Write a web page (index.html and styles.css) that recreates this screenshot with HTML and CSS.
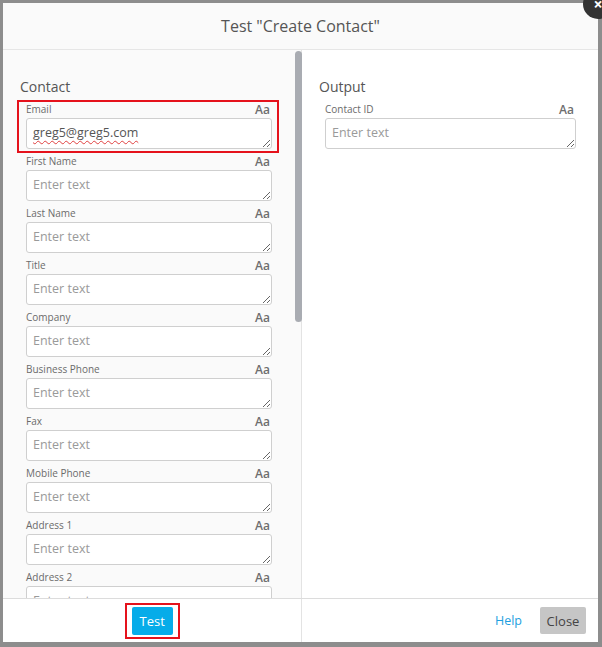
FILE: index.html
```html
<!DOCTYPE html>
<html lang="en">
<head>
<meta charset="utf-8">
<title>Test "Create Contact"</title>
<link rel="stylesheet" href="styles.css">
</head>
<body>
<div class="modal">
  <div class="modal-close"><span>×</span></div>
  <header class="modal-header">Test "Create Contact"</header>
  <div class="modal-body">
    <section class="pane pane-input">
      <h2 class="pane-title">Contact</h2>
      <div class="field field-marked">
        <div class="field-label"><span>Email</span><span class="aa">Aa</span></div>
        <textarea class="field-input filled" spellcheck="false">greg5@greg5.com</textarea>
      </div>
      <div class="field">
        <div class="field-label"><span>First Name</span><span class="aa">Aa</span></div>
        <textarea class="field-input" placeholder="Enter text"></textarea>
      </div>
      <div class="field">
        <div class="field-label"><span>Last Name</span><span class="aa">Aa</span></div>
        <textarea class="field-input" placeholder="Enter text"></textarea>
      </div>
      <div class="field">
        <div class="field-label"><span>Title</span><span class="aa">Aa</span></div>
        <textarea class="field-input" placeholder="Enter text"></textarea>
      </div>
      <div class="field">
        <div class="field-label"><span>Company</span><span class="aa">Aa</span></div>
        <textarea class="field-input" placeholder="Enter text"></textarea>
      </div>
      <div class="field">
        <div class="field-label"><span>Business Phone</span><span class="aa">Aa</span></div>
        <textarea class="field-input" placeholder="Enter text"></textarea>
      </div>
      <div class="field">
        <div class="field-label"><span>Fax</span><span class="aa">Aa</span></div>
        <textarea class="field-input" placeholder="Enter text"></textarea>
      </div>
      <div class="field">
        <div class="field-label"><span>Mobile Phone</span><span class="aa">Aa</span></div>
        <textarea class="field-input" placeholder="Enter text"></textarea>
      </div>
      <div class="field">
        <div class="field-label"><span>Address 1</span><span class="aa">Aa</span></div>
        <textarea class="field-input" placeholder="Enter text"></textarea>
      </div>
      <div class="field">
        <div class="field-label"><span>Address 2</span><span class="aa">Aa</span></div>
        <textarea class="field-input" placeholder="Enter text"></textarea>
      </div>
      <div class="field">
        <div class="field-label"><span>City</span><span class="aa">Aa</span></div>
        <textarea class="field-input" placeholder="Enter text"></textarea>
      </div>
      <div class="field">
        <div class="field-label"><span>State</span><span class="aa">Aa</span></div>
        <textarea class="field-input" placeholder="Enter text"></textarea>
      </div>
    </section>
    <!-- scroll indicator for the contact pane -->
    <div class="pane-scroll-thumb"></div>
    <section class="pane pane-output">
      <h2 class="pane-title">Output</h2>
      <div class="field">
        <div class="field-label"><span>Contact ID</span><span class="aa">Aa</span></div>
        <textarea class="field-input" placeholder="Enter text"></textarea>
      </div>
    </section>
  </div>
  <footer class="modal-footer">
    <div class="footer-left">
      <button class="btn btn-primary btn-marked">Test</button>
    </div>
    <div class="footer-right">
      <a class="help-link" href="#">Help</a>
      <button class="btn btn-secondary">Close</button>
    </div>
  </footer>
</div>
</body>
</html>
```

FILE: styles.css
```css
* {
  box-sizing: border-box;
}

html, body {
  margin: 0;
  height: 100%;
}

body {
  background: #8d8d8d;
  padding: 3px 4px 5px 3px;
  font-family: "Open Sans", "Liberation Sans", sans-serif;
  color: #555;
  overflow: hidden;
}

.modal {
  position: relative;
  width: 595px;
  height: 639px;
  background: #fafafa;
  display: flex;
  flex-direction: column;
}

/* round close badge hanging off the top-right corner */
.modal-close {
  position: absolute;
  top: -14px;
  right: -15px;
  width: 30px;
  height: 30px;
  border-radius: 50%;
  background: #333;
  color: #fff;
  font-size: 16px;
  line-height: 30px;
  text-align: center;
  font-weight: 700;
  z-index: 2;
}

.modal-header {
  height: 47px;
  flex: none;
  border-bottom: 1px solid #e6e6e6;
  display: flex;
  align-items: center;
  justify-content: center;
  font-size: 16px;
  color: #555;
  padding-bottom: 1px;
}

.modal-body {
  position: relative;
  flex: 1;
  display: flex;
  min-height: 0;
}

.pane {
  height: 100%;
}

.pane-input {
  width: 299px;
  flex: none;
  overflow: hidden;
  border-right: 1px solid #e3e3e3;
  padding: 27px 29px 12px 23px;
  background: #fafafa;
}

.pane-scroll-thumb {
  position: absolute;
  top: 1px;
  left: 292px;
  width: 7px;
  height: 271px;
  border-radius: 4px;
  background: #a9acb2;
}

.pane-output {
  flex: 1;
  background: #fff;
  padding: 27px 22px 12px 23px;
}

.pane-title {
  margin: 0 0 5px -6px;
  font-size: 14px;
  line-height: 20px;
  font-weight: 500;
  color: #555;
}

.field {
  position: relative;
  margin-bottom: 5px;
}

.field-marked::after {
  content: "";
  position: absolute;
  top: -2px;
  left: -9px;
  right: -7px;
  bottom: -4px;
  border: 2px solid #e5121c;
  pointer-events: none;
}

.field-label {
  display: flex;
  justify-content: space-between;
  align-items: center;
  height: 14px;
  margin-bottom: 2px;
  font-size: 10px;
  color: #6b6b6b;
}

.aa {
  font-size: 12px;
  font-weight: 600;
  color: #6e6e6e;
  margin-right: 2px;
}

.field-input {
  display: block;
  width: 100%;
  height: 31px;
  margin: 0;
  padding: 5px 6px;
  border: 1px solid #cfcfcf;
  border-radius: 3px;
  background: #fff;
  font-family: "Open Sans", "Liberation Sans", sans-serif;
  font-size: 12.5px;
  line-height: 17px;
  color: #555;
  resize: vertical;
  overflow: hidden;
}

.field-input::placeholder {
  color: #9a9a9a;
}

.field-input.filled {
  text-decoration: underline wavy #e04040;
  text-decoration-thickness: 1px;
  text-underline-offset: 3px;
}

.modal-footer {
  height: 44px;
  flex: none;
  display: flex;
  border-top: 1px solid #dcdcdc;
  background: #fff;
}

.footer-left {
  width: 299px;
  flex: none;
  border-right: 1px solid #e3e3e3;
  display: flex;
  align-items: center;
  justify-content: center;
}

.footer-right {
  flex: 1;
  display: flex;
  align-items: center;
  justify-content: flex-end;
  gap: 18px;
  padding-right: 12px;
}

.btn {
  font-family: "Open Sans", "Liberation Sans", sans-serif;
  font-size: 13px;
  border: 0;
  border-radius: 2px;
  height: 28px;
  padding: 0 8px;
  margin: 0;
  cursor: pointer;
}

.btn-primary {
  position: relative;
  width: 41px;
  background: #06ace9;
  color: #fff;
}

.btn-marked::after {
  content: "";
  position: absolute;
  top: -4px;
  left: -7px;
  right: -7px;
  bottom: -4px;
  border: 2px solid #e5121c;
}

.btn-secondary {
  width: 46px;
  height: 27px;
  background: #c6c6c6;
  color: #444;
  padding: 0;
}

.help-link {
  font-size: 12.5px;
  color: #1d9fe0;
  text-decoration: none;
}
```
